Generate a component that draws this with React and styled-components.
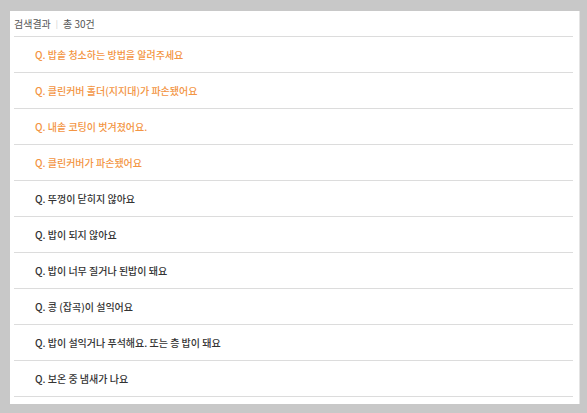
import styled, { createGlobalStyle } from "styled-components";

const GlobalStyle = createGlobalStyle`
  html, body {
    margin: 0;
    padding: 0;
    background: #c8c8c8;
  }
  body {
    font-family: "Noto Sans CJK KR", "Noto Sans", sans-serif;
  }
`;

const items = [
  { text: "Q. 밥솥 청소하는 방법을 알려주세요", hot: true },
  { text: "Q. 클린커버 홀더(지지대)가 파손됐어요", hot: true },
  { text: "Q. 내솥 코팅이 벗겨졌어요.", hot: true },
  { text: "Q. 클린커버가 파손됐어요", hot: true },
  { text: "Q. 뚜껑이 닫히지 않아요" },
  { text: "Q. 밥이 되지 않아요" },
  { text: "Q. 밥이 너무 질거나 된밥이 돼요" },
  { text: "Q. 콩 (잡곡)이 설익어요" },
  { text: "Q. 밥이 설익거나 푸석해요. 또는 층 밥이 돼요" },
  { text: "Q. 보온 중 냄새가 나요" },
];

export default function App() {
  return (
    <>
      <GlobalStyle />
      <Page>
        <Panel>
          <Header>
            검색결과<Divider>|</Divider>총 30건
          </Header>
          <List>
            {items.map((item) => (
              <Row key={item.text}>
                <Question $hot={item.hot}>{item.text}</Question>
              </Row>
            ))}
          </List>
        </Panel>
      </Page>
    </>
  );
}

const Page = styled.div`
  padding: 11px 6px 10px 10px;
`;

const Panel = styled.div`
  background: #fff;
  width: 570px;
  padding: 0 6px 7px 4px;
  box-sizing: border-box;
  border-right: 1px solid #e4e4e4;
`;

const Header = styled.div`
  height: 25px;
  display: flex;
  align-items: center;
  font-size: 10px;
  color: #555;
  border-bottom: 1px solid #dcdcdc;
`;

const Divider = styled.span`
  color: #ccc;
  font-size: 8px;
  margin: 0 5px;
`;

const List = styled.ul`
  list-style: none;
  margin: 0;
  padding: 0;
`;

const Row = styled.li`
  height: 35px;
  display: flex;
  align-items: center;
  padding-left: 21px;
  border-bottom: 1px solid #dcdcdc;
`;

const Question = styled.span`
  font-size: 10px;
  font-weight: 500;
  color: ${({ $hot }) => ($hot ? "#f39543" : "#333")};
`;
